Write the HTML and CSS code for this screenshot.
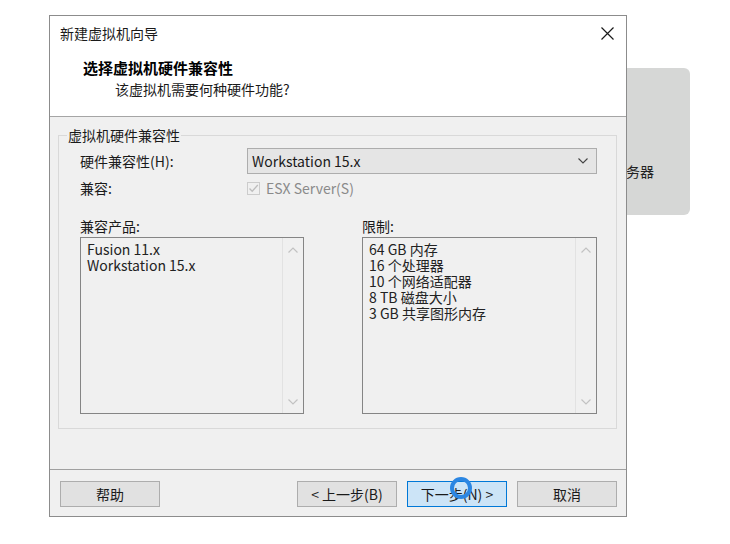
FILE: index.html
```html
<!DOCTYPE html>
<html lang="zh-CN">
<head>
<meta charset="utf-8">
<title>新建虚拟机向导</title>
<link rel="stylesheet" href="styles.css">
</head>
<body>
<div class="page">
  <div class="bgcard"><span class="bgcard-text">服务器</span></div>
  <div class="dialog">
    <div class="header">
      <div class="titlebar">
        <span class="wtitle">新建虚拟机向导</span>
        <svg class="close" width="13" height="13" viewBox="0 0 13 13"><path d="M0.5 0.5 L12.5 12.5 M12.5 0.5 L0.5 12.5" stroke="#1a1a1a" stroke-width="1.2" fill="none"/></svg>
      </div>
      <div class="h-title">选择虚拟机硬件兼容性</div>
      <div class="h-sub">该虚拟机需要何种硬件功能?</div>
    </div>
    <div class="body">
      <fieldset class="group">
        <legend class="legend">虚拟机硬件兼容性</legend>
        <div class="group-inner">
          <div class="row row-hw">
            <span class="lbl">硬件兼容性(H):</span>
            <div class="select">
              <span>Workstation 15.x</span>
              <svg width="10" height="6" viewBox="0 0 10 6"><path d="M0.5 0.5 L5 5 L9.5 0.5" stroke="#444" stroke-width="1.1" fill="none"/></svg>
            </div>
          </div>
          <div class="row row-compat">
            <span class="lbl">兼容:</span>
            <span class="check">
              <span class="box"><svg width="11" height="11" viewBox="0 0 11 11"><path d="M1.5 5.5 L4.2 8.3 L9.8 2" stroke="#bdbdbd" stroke-width="1.3" fill="none"/></svg></span>
              <span class="check-text">ESX Server(S)</span>
            </span>
          </div>
          <div class="lists">
            <div class="col">
              <div class="col-lbl">兼容产品:</div>
              <div class="listbox">
                <div class="items">
                  <div>Fusion 11.x</div>
                  <div>Workstation 15.x</div>
                </div>
                <div class="scroll">
                  <svg width="10" height="6" viewBox="0 0 10 6"><path d="M0.5 5.5 L5 1 L9.5 5.5" stroke="#c2c2c2" stroke-width="1.2" fill="none"/></svg>
                  <svg width="10" height="6" viewBox="0 0 10 6"><path d="M0.5 0.5 L5 5 L9.5 0.5" stroke="#c2c2c2" stroke-width="1.2" fill="none"/></svg>
                </div>
              </div>
            </div>
            <div class="col">
              <div class="col-lbl">限制:</div>
              <div class="listbox">
                <div class="items">
                  <div>64 GB 内存</div>
                  <div>16 个处理器</div>
                  <div>10 个网络适配器</div>
                  <div>8 TB 磁盘大小</div>
                  <div>3 GB 共享图形内存</div>
                </div>
                <div class="scroll">
                  <svg width="10" height="6" viewBox="0 0 10 6"><path d="M0.5 5.5 L5 1 L9.5 5.5" stroke="#c2c2c2" stroke-width="1.2" fill="none"/></svg>
                  <svg width="10" height="6" viewBox="0 0 10 6"><path d="M0.5 0.5 L5 5 L9.5 0.5" stroke="#c2c2c2" stroke-width="1.2" fill="none"/></svg>
                </div>
              </div>
            </div>
          </div>
        </div>
      </fieldset>
      <div class="footer">
        <div class="btn">帮助</div>
        <div class="btn btn-back">&lt; 上一步(B)</div>
        <div class="btn btn-primary">下一步(N) &gt;</div>
        <div class="btn">取消</div>
      </div>
    </div>
  </div>
  <div class="cursor"></div>
</div>
</body>
</html>
```
FILE: styles.css
```css
html, body {
  margin: 0;
  padding: 0;
  background: #ffffff;
}
body {
  font-family: "Noto Sans CJK SC", "Noto Sans", sans-serif;
  font-size: 14px;
  color: #111;
}
.page {
  position: relative;
  width: 730px;
  height: 544px;
  box-sizing: border-box;
  padding: 15px 0 0 49px;
  overflow: hidden;
  background: #fff;
}
.bgcard {
  position: absolute;
  left: 560px;
  top: 68px;
  width: 130px;
  height: 147px;
  border-radius: 6px;
  background: #d6d7d6;
}
.bgcard-text {
  position: absolute;
  left: 52px;
  top: 94px;
  line-height: 18px;
  font-size: 14px;
  color: #222;
}
.dialog {
  position: relative;
  z-index: 1;
  width: 578px;
  height: 502px;
  box-sizing: border-box;
  border: 1px solid #8c8c8c;
  background: #f0f0f0;
  display: flex;
  flex-direction: column;
}
.header {
  height: 100px;
  flex: none;
  background: #ffffff;
  border-bottom: 1px solid #a5a5a5;
}
.titlebar {
  height: 34px;
  display: flex;
  align-items: center;
  justify-content: space-between;
  padding: 0 12px 0 10px;
}
.wtitle {
  line-height: 18px;
  font-size: 14px;
  color: #1a1a1a;
}
.close {
  display: block;
}
.h-title {
  margin-top: 9px;
  padding-left: 33px;
  font-size: 15px;
  font-weight: bold;
  line-height: 18px;
  color: #000;
}
.h-sub {
  margin-top: 3px;
  padding-left: 65px;
  font-size: 14px;
  line-height: 18px;
  color: #1a1a1a;
}
.body {
  flex: 1;
  display: flex;
  flex-direction: column;
  padding-top: 9px;
}
.group {
  margin: 0 9px 0 8px;
  padding: 0;
  border: 1px solid #d9d9d9;
  min-width: 0;
}
.legend {
  margin-left: 8px;
  padding: 0 1px;
  line-height: 18px;
  font-size: 14px;
  color: #1a1a1a;
}
.group-inner {
  padding: 0 19px 14px 21px;
}
.row {
  display: flex;
  align-items: center;
}
.row-hw {
  margin-top: 4px;
  height: 26px;
}
.lbl {
  width: 167px;
  flex: none;
  line-height: 18px;
  color: #1a1a1a;
}
.select {
  flex: 1;
  height: 26px;
  box-sizing: border-box;
  border: 1px solid #adadad;
  background: #e5e5e5;
  display: flex;
  align-items: center;
  justify-content: space-between;
  padding: 0 8px 0 4px;
  line-height: 18px;
  color: #1a1a1a;
}
.select svg {
  display: block;
}
.row-compat {
  margin-top: 6px;
  height: 16px;
}
.check {
  display: flex;
  align-items: center;
}
.box {
  width: 13px;
  height: 13px;
  box-sizing: border-box;
  border: 1px solid #cccccc;
  display: flex;
  align-items: center;
  justify-content: center;
  margin-right: 6px;
}
.box svg {
  display: block;
}
.check-text {
  color: #8a8a8a;
  line-height: 18px;
}
.lists {
  margin-top: 21px;
  display: grid;
  grid-template-columns: 224px 235px;
  column-gap: 58px;
}
.col-lbl {
  line-height: 18px;
  color: #1a1a1a;
}
.listbox {
  margin-top: 2px;
  height: 177px;
  box-sizing: border-box;
  border: 1px solid #858585;
  background: #f0f0f0;
  display: flex;
}
.items {
  flex: 1;
  padding: 3px 0 0 6px;
  line-height: 16px;
  color: #222;
}
.scroll {
  width: 20px;
  flex: none;
  border-left: 1px solid #e2e2e2;
  display: flex;
  flex-direction: column;
  justify-content: space-between;
  align-items: center;
  padding: 9px 0 8px;
}
.scroll svg {
  display: block;
}
.footer {
  margin-top: auto;
  border-top: 1px solid #a0a0a0;
  padding: 11px 9px 9px 10px;
  display: flex;
}
.btn {
  width: 100px;
  height: 26px;
  box-sizing: border-box;
  border: 1px solid #adadad;
  background: #e1e1e1;
  display: flex;
  align-items: center;
  justify-content: center;
  line-height: 18px;
  color: #1a1a1a;
}
.btn-back {
  margin-left: auto;
  margin-right: 10px;
}
.btn-primary {
  background: #cce4f7;
  border-color: #0078d7;
  margin-right: 10px;
}
.cursor {
  position: absolute;
  z-index: 2;
  left: 450px;
  top: 477px;
  width: 22px;
  height: 22px;
  box-sizing: border-box;
  border: 4px solid #2b86e2;
  border-radius: 50%;
}
```
